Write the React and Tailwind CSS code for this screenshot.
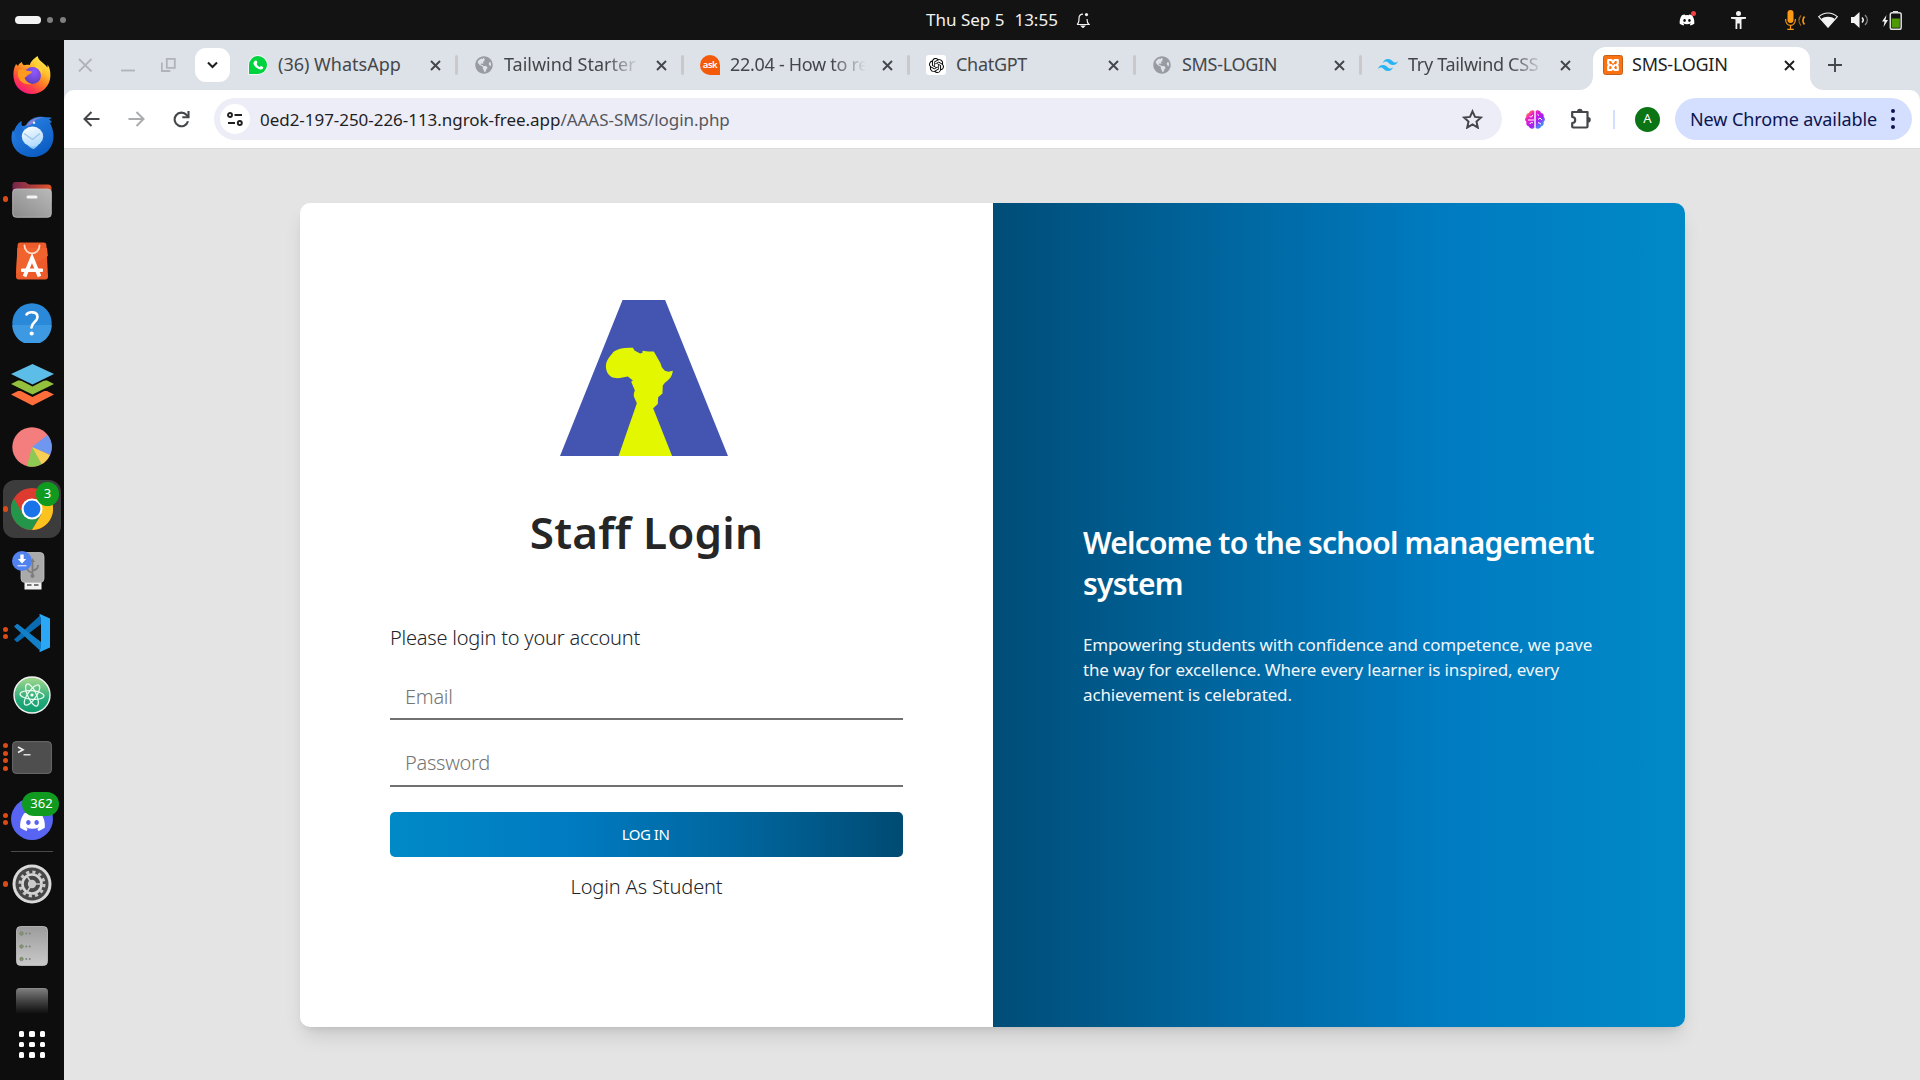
import React from "react";
import { FaDiscord, FaWhatsapp, FaGlobeAmericas } from "react-icons/fa";
import { SiTailwindcss, SiOpenai } from "react-icons/si";

/* ---------- dock icons (64px wide column, 62px pitch) ---------- */

function Firefox() {
  return (
    <svg width="38" height="40" viewBox="0 0 38 40">
      <defs>
        <linearGradient id="ffBody" x1="0.85" y1="0.05" x2="0.25" y2="1">
          <stop offset="0" stopColor="#fff44f" />
          <stop offset="0.3" stopColor="#ffc02e" />
          <stop offset="0.55" stopColor="#ff7a26" />
          <stop offset="0.8" stopColor="#ff3750" />
          <stop offset="1" stopColor="#f0128a" />
        </linearGradient>
        <radialGradient id="ffCore" cx="0.6" cy="0.3" r="0.8">
          <stop offset="0" stopColor="#9059ff" />
          <stop offset="1" stopColor="#5b3bb5" />
        </radialGradient>
      </defs>
      <path d="M24.5 1C19 5 17 8 17 10c-2-.6-5-.3-6 .2-1.500-.8-2-2.200-2-3.200-2 .8-3.500 2.500-4 4L3 9C.6 13 0 18 .6 23 2 33 10 39 19 39s18-7 18.400-18c.2-5-1-9-2.900-11.500.2 1.500 0 2.500-.3 3C32 8 26 7 24.500 1z" fill="url(#ffBody)" />
      <circle cx="19.500" cy="20.500" r="8.500" fill="url(#ffCore)" />
      <path d="M5 15c4-1.500 6-.5 8 .5l6 1c0 2-3 2.500-4 3.500-1.500 1-2 2.500-3.500 2.500 1 3 3 5.500 7 6.500-7 1-12-2-13.500-8z" fill="#ff9a1f" />
      <path d="M22 12c3 1 6 4 6.500 7 2-4 .5-9-4.500-11-1 1.500-1.500 3-2 4z" fill="#ffd23a" />
    </svg>
  );
}

function Thunderbird() {
  return (
    <svg width="43" height="42" viewBox="0 0 43 42">
      <defs>
        <linearGradient id="tbBody" x1="0" y1="0" x2="0.6" y2="1">
          <stop offset="0" stopColor="#2f86e6" />
          <stop offset="1" stopColor="#0b5dc4" />
        </linearGradient>
        <linearGradient id="tbMail" x1="0" y1="0" x2="0.4" y2="1">
          <stop offset="0" stopColor="#ffffff" />
          <stop offset="1" stopColor="#b4dcfd" />
        </linearGradient>
      </defs>
      <path d="M15 9C19 2 26 0 33 1c3 .2 6 .3 8 1-1 .6-2 1-3 1.200L41 6l-2 1c2 4 3.500 8 3.500 13C42.500 33 33 41 21.500 41S.5 33 .5 22c0-3 .5-6 1.500-8l1 2c1-4 3-8 7.500-11-1 3 0 7 4.500 4z" fill="url(#tbBody)" />
      <path d="M15 10C19 3 26 1 33 1.500c-6 .5-9 2.500-11 5.500-2 2-5 3-7 3z" fill="#8a7fd6" />
      <path d="M3 16c1-4 3-8 7.500-11-.5 5 .5 8 2 10-2 3-3 8-1 13-4-2-7-7-8.500-12z" fill="#1b6fd4" />
      <path d="M17 29c4 2 8 1 11-1-1 2-4 4-5 5-3-.5-5-2-6-4z" fill="#8cc6fb" />
      <ellipse cx="21.500" cy="20.500" rx="10.700" ry="10" fill="url(#tbMail)" />
      <path d="M13 17.500l8.500 6 7.500-6" fill="none" stroke="#9cc3ea" strokeWidth="1.100" />
      <circle cx="23" cy="6.800" r="1.200" fill="#dff0ff" />
    </svg>
  );
}

function Files() {
  return (
    <svg width="40" height="37" viewBox="0 0 40 37">
      <defs>
        <linearGradient id="flBack" x1="0" x2="1">
          <stop offset="0" stopColor="#74254e" />
          <stop offset="1" stopColor="#e2552a" />
        </linearGradient>
        <linearGradient id="flFront" x1="0" y1="1" x2="1" y2="0">
          <stop offset="0" stopColor="#8b8b8b" />
          <stop offset="1" stopColor="#b9b9b9" />
        </linearGradient>
      </defs>
      <path d="M.5 4a3 3 0 0 1 3-3H13c1.500 0 2.500 2.500 4.500 2.500H36a3.500 3.500 0 0 1 3.500 3.500v14H.5z" fill="url(#flBack)" />
      <rect x=".7" y="8" width="38.600" height="28.300" rx="3.500" fill="url(#flFront)" stroke="#c4c4c4" strokeWidth=".8" />
      <rect x="14.500" y="14.500" width="11" height="3" rx="1.500" fill="#f4f4f4" />
    </svg>
  );
}

function Software() {
  return (
    <svg width="32" height="38" viewBox="0 0 32 38">
      <path d="M4 .5h24c1.500 0 2.300 1 2.400 2.500L32 34.500c0 2-1 3-2.500 3h-27C1 37.500 0 36.500 0 34.500L1.600 3C1.700 1.500 2.500.5 4 .5z" fill="#ec5b29" />
      <path d="M1.400 6 L.1 32 L31.900 14 L31 6z" fill="#f0632e" />
      <path d="M8.500 3.500c0 10.500 15 10.500 15 0" fill="none" stroke="#ffd9c7" strokeWidth="1.800" strokeLinecap="round" />
      <path d="M8.500 34.500L16 16l7.500 18.500" fill="none" stroke="#fff" strokeWidth="3.800" />
      <rect x="5" y="26.500" width="22" height="3.400" rx="1" fill="#fff" />
    </svg>
  );
}

function Help() {
  return (
    <svg width="40" height="40" viewBox="0 0 40 40">
      <circle cx="20" cy="20" r="19.700" fill="#2b89d9" />
      <path d="M.3 22a19.700 19.700 0 0 0 39.400 0z" fill="#3d9ae2" />
      <path d="M14.500 11.500c2-3 11-3.500 11 2.500 0 5-6 5-6 10.500" fill="none" stroke="#fff" strokeWidth="2.600" strokeLinecap="round" />
      <circle cx="19.700" cy="30.500" r="2.100" fill="#fff" />
    </svg>
  );
}

function Layers() {
  return (
    <svg width="43" height="42" viewBox="0 0 43 42">
      <path d="M0 30.500l21.500 11 21.500-11-7-3.500H7z" fill="#ff6d3b" />
      <path d="M0 20.500l21.500 11 21.500-11-7-3.500H7z" fill="#0d0d0d" transform="translate(0 1.500)" />
      <path d="M0 20l21.500 10.500L43 20l-7-3.500H7z" fill="#93c13d" />
      <path d="M0 11.500L21.500 22.500 43 11.500z" fill="#0d0d0d" />
      <path d="M0 10L21.500 0 43 10 21.500 20.500z" fill="#5bbde8" />
    </svg>
  );
}

function Pie() {
  return (
    <svg width="40" height="40" viewBox="0 0 40 40">
      <circle cx="20" cy="20" r="19.700" fill="#f47d7d" />
      <path d="M20 20L35.500 8A19.700 19.700 0 0 1 38 28z" fill="#6f97ef" />
      <path d="M20 20l18 8a19.700 19.700 0 0 1-8.500 9.300z" fill="#f8cf55" />
      <path d="M20 20l9.500 17.300a19.700 19.700 0 0 1-14.500 1.800z" fill="#8cca54" />
    </svg>
  );
}

function Chrome() {
  return (
    <svg width="42" height="42" viewBox="0 0 42 42">
      <circle cx="21" cy="21" r="21" fill="#dd3b30" />
      <path d="M2.800 10.500A21 21 0 0 0 21 42l9.500-16.500L12 26z" fill="#23964a" />
      <path d="M30.500 26L21 42A21 21 0 0 0 39.500 11H21z" fill="#fcc31e" />
      <circle cx="21" cy="21" r="10.500" fill="#fff" />
      <circle cx="21" cy="21" r="8.400" fill="#1a73e8" />
    </svg>
  );
}

function UsbCreator() {
  return (
    <svg width="40" height="40" viewBox="0 0 40 40">
      <rect x="12.500" y="29" width="17" height="9.500" fill="#f2f2f2" />
      <rect x="15" y="33" width="4.500" height="2" fill="#777" />
      <rect x="22" y="33" width="4.500" height="2" fill="#777" />
      <rect x="9" y="1.500" width="23" height="30" rx="4" fill="#aaa" stroke="#c2c2c2" strokeWidth=".8" />
      <path d="M20.500 26V10M20.500 22c-5-2-5.500-3-5.500-7M20.500 20c5-2 5.500-3 5.500-6" fill="none" stroke="#7d7d7d" strokeWidth="1.800" />
      <circle cx="20.500" cy="25" r="2" fill="#7d7d7d" />
      <path d="M18 11l2.500-4 2.500 4z" fill="#7d7d7d" />
      <circle cx="10" cy="10" r="10" fill="#5282ee" />
      <path d="M10 3.500v5" stroke="#fff" strokeWidth="3.400" />
      <path d="M5.800 8l4.200 4.500L14.200 8z" fill="#fff" />
      <rect x="5.500" y="14" width="9" height="1.400" fill="#c9d8fb" />
    </svg>
  );
}

function VsCode() {
  return (
    <svg width="38" height="38" viewBox="0 0 38 38">
      <path d="M1 25.500l2.500 2.200c.5.400 1 .4 1.500 0L28 10V.5z" fill="#0a6cb3" />
      <path d="M1 12.500l2.500-2.200c.5-.4 1-.4 1.500 0L28 28v9.500z" fill="#1180c8" />
      <path d="M27.500.3L37 4.500v29l-9.500 4.200c-.6.2-1 0-1.300-.3L28 34V4L26.200.6c.3-.3.700-.5 1.300-.3z" fill="#2aa8f5" />
    </svg>
  );
}

function Atom() {
  return (
    <svg width="38" height="38" viewBox="0 0 38 38">
      <defs>
        <linearGradient id="atBg" x1="0" y1="0" x2="0" y2="1">
          <stop offset="0" stopColor="#a5d98c" />
          <stop offset="0.65" stopColor="#23a97a" />
          <stop offset="1" stopColor="#0d9b6c" />
        </linearGradient>
      </defs>
      <circle cx="19" cy="19" r="18" fill="url(#atBg)" stroke="#f2f2f2" strokeWidth="1.400" />
      <g fill="none" stroke="#eafbf1" strokeWidth="1.200">
        <ellipse cx="19" cy="19" rx="12" ry="4.300" transform="rotate(5 19 19)" />
        <ellipse cx="19" cy="19" rx="12" ry="4.300" transform="rotate(65 19 19)" />
        <ellipse cx="19" cy="19" rx="12" ry="4.300" transform="rotate(125 19 19)" />
      </g>
      <circle cx="19" cy="19" r="1.600" fill="#fff" />
    </svg>
  );
}

function Terminal() {
  return (
    <svg width="40" height="33" viewBox="0 0 40 33">
      <rect x=".6" y=".6" width="38.800" height="31.800" rx="3.500" fill="#4e4e4e" stroke="#6c6c6c" />
      <path d="M6 6l5 2.800L6 11.500" fill="none" stroke="#eee" strokeWidth="1.700" />
      <rect x="11.500" y="13" width="7" height="1.500" fill="#ddd" />
    </svg>
  );
}

function Discord() {
  return (
    <span className="flex size-[42px] items-center justify-center rounded-full bg-[#5865f2]">
      <FaDiscord className="mt-1 size-[27px] text-white" />
    </span>
  );
}

function Settings() {
  return (
    <svg width="40" height="40" viewBox="0 0 40 40">
      <circle cx="20" cy="20" r="19.500" fill="#d9d9d9" />
      <circle cx="20" cy="20" r="16.500" fill="#474747" />
      <circle cx="20" cy="20" r="12" fill="none" stroke="#c8c8c8" strokeWidth="3" strokeDasharray="3.140 3.140" />
      <circle cx="20" cy="20" r="9.500" fill="none" stroke="#d4d4d4" strokeWidth="2.600" />
      <circle cx="20" cy="20" r="4.200" fill="#c9c9c9" />
      <path d="M20 20h9M20 20l-5-8M20 20l-5 8" stroke="#c9c9c9" strokeWidth="1.600" />
    </svg>
  );
}

function Server() {
  return (
    <svg width="32" height="40" viewBox="0 0 32 40">
      <defs>
        <linearGradient id="svBg" x1="0" y1="0" x2="0" y2="1">
          <stop offset="0" stopColor="#9c9c9c" />
          <stop offset="1" stopColor="#c9c9c9" />
        </linearGradient>
      </defs>
      <rect x=".5" y=".5" width="31" height="39" rx="4" fill="url(#svBg)" stroke="#c5c5c5" strokeWidth=".8" />
      {[7.5, 20.5, 33].map((y) => (
        <g key={y}>
          <circle cx="5.500" cy={y} r="1.800" fill="#7f9a63" stroke="#777" strokeWidth=".6" />
          <circle cx="10.300" cy={y} r="1" fill="#808080" />
          <circle cx="13.800" cy={y} r="1" fill="#808080" />
        </g>
      ))}
    </svg>
  );
}

const DOCK = [
  { Icon: Firefox, dots: 0 },
  { Icon: Thunderbird, dots: 0 },
  { Icon: Files, dots: 1 },
  { Icon: Software, dots: 0 },
  { Icon: Help, dots: 0 },
  { Icon: Layers, dots: 0 },
  { Icon: Pie, dots: 0 },
  { Icon: Chrome, dots: 1, badge: "3", active: true },
  { Icon: UsbCreator, dots: 0 },
  { Icon: VsCode, dots: 2 },
  { Icon: Atom, dots: 0 },
  { Icon: Terminal, dots: 4 },
  { Icon: Discord, dots: 2, badge: "362" },
];

function DockItem({ Icon, dots = 0, badge, active }) {
  return (
    <div className="relative flex h-[62px] w-16 shrink-0 items-center justify-center">
      {active && <span className="absolute top-[2px] left-[3px] h-[58px] w-[58px] rounded-xl bg-[#3c3c3c]" />}
      <span className="absolute inset-y-0 left-[3px] flex flex-col justify-center gap-[2.600px]">
        {Array.from({ length: dots }, (_, i) => (
          <span key={i} className="size-[5.200px] rounded-full bg-[#dc4a16]" />
        ))}
      </span>
      <span className="relative">
        <Icon />
      </span>
      {badge && (
        <span className={`absolute top-[4px] flex h-[24px] items-center justify-center rounded-full bg-[#119a20] text-[13px] text-white ${badge.length > 1 ? "left-[22px] w-[37px] pl-[2px]" : "left-[36px] w-[23px]"}`}>
          {badge}
        </span>
      )}
    </div>
  );
}

function Dock() {
  return (
    <aside className="flex w-16 shrink-0 flex-col items-center bg-[#0d0d0d] pt-[4px]">
      {DOCK.map((item, i) => (
        <DockItem key={i} {...item} />
      ))}
      <span className="mt-px h-px w-[42px] shrink-0 bg-[#4b4b4b]" />
      <div className="mt-px">
        <DockItem Icon={Settings} dots={1} />
      </div>
      <DockItem Icon={Server} />
      <span className="mt-[11px] h-[26px] w-8 shrink-0 rounded-t border-t border-[#8a8a8a] bg-linear-to-b from-[#7c7c7c] to-[#0d0d0d]" />
      <div className="mt-[17px] grid shrink-0 grid-cols-3 gap-[5px]">
        {Array.from({ length: 9 }, (_, i) => (
          <span key={i} className="size-[5.500px] rounded-[1.500px] bg-white" />
        ))}
      </div>
    </aside>
  );
}

/* ---------- top bar ---------- */

function TopBar() {
  return (
    <header className="flex h-10 shrink-0 items-center bg-[#131313] text-[17px] text-[#f2f2f2]">
      <div className="flex w-[926px] items-center pl-[15px]">
        <span className="h-2 w-[26px] rounded-full bg-[#f4f4f4]" />
        <span className="ml-[6px] size-[6px] rounded-full bg-[#808080]" />
        <span className="ml-[7px] size-[6px] rounded-full bg-[#808080]" />
      </div>
      <span className="pb-px whitespace-pre">Thu Sep 5</span>
      <span className="ml-[10px] w-[44px] pb-px">13:55</span>
      <svg className="ml-[18px]" width="14" height="16" viewBox="0 0 14 16" fill="none" stroke="#f2f2f2" strokeWidth="1.200">
        <path d="M1 12.500c2-1.500 2-3 2-6C3 4 4.500 2.200 7 2.200M11 7c0 2.500 0 4 2 5.500H1" />
        <path d="M5.500 14h3L7 15.500z" fill="#f2f2f2" />
        <circle cx="10.500" cy="2.600" r="1.600" fill="#f2f2f2" stroke="none" />
      </svg>
      <div className="ml-auto flex items-center pr-[18px]">
        <span className="relative mr-[36px] flex">
          <FaDiscord className="size-[16px] text-white" />
          <span className="absolute -top-px -right-px size-[5px] rounded-full bg-[#f23f42]" />
        </span>
        <svg className="mr-[39px]" width="15" height="18" viewBox="0 0 15 18" fill="#f2f2f2">
          <circle cx="7.500" cy="2.500" r="2.500" />
          <path d="M0 6h15v1.700l-4.500.6V18H8.700v-5.500H6.300V18H4.500V8.300L0 7.700z" />
        </svg>
        <svg className="mr-[13px]" width="20" height="20" viewBox="0 0 20 20" fill="none" stroke="#fb9a15">
          <rect x="2.500" y="0" width="6" height="13" rx="3" fill="#fb9a15" stroke="none" />
          <path d="M.6 9c0 8.500 9.800 8.500 9.800 0M5.500 15.500V19M2.300 19.400h6.400" strokeWidth="1.200" />
          <path d="M16 5.500c-2.500 3-2.500 7 0 10" strokeWidth="1.200" opacity=".6" />
          <path d="M19.500 6.500c-2 2.500-2 5.500 0 8" strokeWidth="1.600" />
        </svg>
        <svg className="mr-[13px]" width="20" height="16" viewBox="0 0 20 16">
          <path d="M.7 4.700C6-.3 14-.3 19.300 4.700L10 15.300z" fill="none" stroke="#f2f2f2" strokeWidth="1.100" />
          <path d="M3 7.200C7 4 13 4 17 7.200l-7 8z" fill="#f2f2f2" />
        </svg>
        <svg className="mr-[13px]" width="18" height="16" viewBox="0 0 18 16">
          <path d="M0 5h3l5.500-5v16L3 11H0z" fill="#f2f2f2" />
          <path d="M11 5.500c1.500 1.500 1.500 3.500 0 5" fill="none" stroke="#f2f2f2" strokeWidth="1.500" />
          <path d="M14 3c3 3 3 7 0 10" fill="none" stroke="#888" strokeWidth="1.400" />
        </svg>
        <svg width="20" height="19" viewBox="0 0 20 19">
          <path d="M4.500 4L0 10.500h2.500L1.500 16 6 9H3.500z" fill="#f2f2f2" />
          <rect x="11" y="0" width="5" height="2" fill="#ddd" />
          <rect x="8.300" y="1.700" width="10.900" height="16.500" rx="1.800" fill="#131313" stroke="#ddd" strokeWidth="1.500" />
          <rect x="9.700" y="7.500" width="8.100" height="9.200" fill="#4e9a06" />
        </svg>
      </div>
    </header>
  );
}

/* ---------- browser ---------- */

function Close({ dark }) {
  return (
    <svg className="shrink-0" width="11" height="11" viewBox="0 0 11 11">
      <path d="M1 1l9 9M10 1l-9 9" stroke={dark ? "#1f1f1f" : "#44474a"} strokeWidth="1.900" />
    </svg>
  );
}

const Globe = () => (
  <span className="flex size-[18px] items-center justify-center">
    <FaGlobeAmericas className="size-[18px] text-[#989ca2]" />
  </span>
);

const WhatsApp = () => (
  <span className="flex size-[18px] items-center justify-center rounded-full rounded-bl-[2px] bg-[#00d33e] ring-1 ring-white/70">
    <svg width="11" height="11" viewBox="0 0 11 11">
      <path d="M2.600.6c.5-.3 1 0 1.200.5l.6 1.400c.1.400-.7 1.100-.7 1.400.5 1.300 1.700 2.500 3 3 .4.100 1-1 1.500-.8l1.800.9c.5.300-.1 1.700-.6 2.100C6.500 11-1.500 5 .9 1.900c.4-.6 1.100-1 1.700-1.300z" fill="#fff" />
    </svg>
  </span>
);

const Ask = () => (
  <span className="flex size-[20px] items-center justify-center rounded-full rounded-br-[2px] bg-[#f35b0a] pb-px text-[9.500px] leading-none font-semibold tracking-[-0.500px] text-white">
    ask
  </span>
);

const Gpt = () => (
  <span className="flex size-[20px] items-center justify-center rounded-[3px] bg-white">
    <SiOpenai className="size-[15px] text-black" />
  </span>
);

const Tailwind = () => <SiTailwindcss className="size-[20px] text-[#27b4f4]" />;

const Xampp = () => (
  <svg width="20" height="20" viewBox="0 0 20 20">
    <rect x=".5" y=".5" width="19" height="19" rx="2" fill="#fb7212" stroke="#c4601a" />
    <path
      d="M10 7.500L8.500 5H5.200v3.700L6.800 10l-1.600 1.300V15h3.300l3-4.800M10 7.500L11.500 5h3.300v3.700L13.200 10l1.600 1.300V15h-3.300L8.300 10"
      fill="none"
      stroke="#fff"
      strokeWidth="2.100"
      strokeLinejoin="round"
      strokeLinecap="round"
    />
  </svg>
);

const TABS = [
  { Icon: WhatsApp, title: "(36) WhatsApp", sep: true },
  { Icon: Globe, title: "Tailwind Starter", sep: true, fade: true },
  { Icon: Ask, title: "22.04 - How to re", sep: true, fade: true, tight: true },
  { Icon: Gpt, title: "ChatGPT", sep: true, tight: true },
  { Icon: Globe, title: "SMS-LOGIN", sep: true, tight: true },
  { Icon: Tailwind, title: "Try Tailwind CSS", fade: true, tight: true },
];

function Tab({ Icon, title, sep, fade, tight }) {
  return (
    <div className="flex w-[226px] shrink-0 items-center pl-[14px]">
      <span className="flex w-[20px] justify-center">
        <Icon />
      </span>
      <span className={`ml-[10px] w-[136px] overflow-hidden pb-[2px] whitespace-nowrap ${fade ? "mask-r-from-75% mask-r-to-100%" : ""} ${tight ? "tracking-[-0.300px]" : ""}`}>
        {title}
      </span>
      <span className="ml-[16px] flex">
        <Close />
      </span>
      {sep && <span className="mr-[2px] ml-auto h-[20px] w-[3px] rounded-full bg-[#c9c9ca]" />}
    </div>
  );
}

function TabStrip() {
  return (
    <div className="flex h-[50px] shrink-0 bg-[#dde1e8] text-[18px] text-[#44474a]">
      <div className="flex w-[170px] shrink-0 items-center">
        <svg className="ml-[14px]" width="15" height="14" viewBox="0 0 15 14">
          <path d="M1 1l12.500 12.500M13.500 1L1 13.500" stroke="#b0b3b8" strokeWidth="1.800" />
        </svg>
        <svg className="ml-[28px]" width="15" height="14" viewBox="0 0 15 14">
          <path d="M0 12.500h14" stroke="#b0b3b8" strokeWidth="1.800" />
        </svg>
        <svg className="ml-[25px]" width="15" height="14" viewBox="0 0 15 14" fill="none" stroke="#b0b3b8" strokeWidth="1.800">
          <path d="M5.800.8h8v9h-8zM.8 4.500V13h8.500" />
        </svg>
        <span className="ml-[19px] flex h-[34px] w-[35px] items-center justify-center rounded-[11px] bg-white">
          <svg width="11" height="8" viewBox="0 0 11 8">
            <path d="M1 1.500L5.500 6 10 1.500" fill="none" stroke="#1f1f1f" strokeWidth="2.100" />
          </svg>
        </span>
      </div>
      {TABS.map((t, i) => (
        <Tab key={i} {...t} />
      ))}
      {/* selected tab with flared feet */}
      <div className="relative mt-[7px] ml-[3px] flex h-[43px] w-[217px] shrink-0 items-center rounded-t-[13px] bg-white pb-[7px] pl-[10px] text-[#1f1f1f]">
        <svg className="absolute bottom-0 -left-[14px]" width="14" height="14" viewBox="0 0 14 14">
          <path d="M14 0v14H0C8 14 14 8 14 0z" fill="#fff" />
        </svg>
        <svg className="absolute -right-[14px] bottom-0" width="14" height="14" viewBox="0 0 14 14">
          <path d="M0 0v14h14C6 14 0 8 0 0z" fill="#fff" />
        </svg>
        <Xampp />
        <span className="ml-[9px] w-[134px] pb-[2px] tracking-[-0.250px]">SMS-LOGIN</span>
        <span className="ml-[18px] flex">
          <Close dark />
        </span>
      </div>
      <svg className="ml-[18px] self-center" width="14" height="14" viewBox="0 0 14 14">
        <path d="M7 0v14M0 7h14" stroke="#44474a" strokeWidth="1.900" />
      </svg>
    </div>
  );
}

function Toolbar() {
  return (
    <div className="h-[58px] shrink-0 bg-[#dde1e8]">
      <div className="flex h-[58px] items-center rounded-t-[10px] bg-white text-[#44474a]">
        <svg className="ml-[19px]" width="17" height="16" viewBox="0 0 17 16" fill="none" stroke="#44474a" strokeWidth="2">
          <path d="M16.500 8H2M8.500 1L1.500 8l7 7" />
        </svg>
        <svg className="ml-[28px]" width="17" height="16" viewBox="0 0 17 16" fill="none" stroke="#a9abad" strokeWidth="2">
          <path d="M.5 8H15M8.500 1l7 7-7 7" />
        </svg>
        <svg className="ml-[28px]" width="17" height="17" viewBox="0 0 17 17" fill="none" stroke="#44474a" strokeWidth="2.100">
          <path d="M15 10.300A6.800 6.800 0 1 1 13.600 4L15.500 6" />
          <path d="M15.500 0v6.300H9.300" />
        </svg>
        <div className="ml-[24px] flex h-[42px] w-[1288px] items-center rounded-full bg-[#ededf8]">
          <span className="ml-[6px] flex size-[30px] items-center justify-center rounded-full bg-white">
            <svg width="16" height="14" viewBox="0 0 16 14" fill="none" stroke="#1f1f1f" strokeWidth="1.900">
              <circle cx="3" cy="3" r="2" />
              <path d="M7.500 3H15M1 11h7" />
              <circle cx="12.800" cy="11" r="2" />
            </svg>
          </span>
          <span className="ml-[10px] pt-px text-[17px] tracking-[-0.040px] text-[#1f1f1f]">
            0ed2-197-250-226-113.ngrok-free.app<span className="text-[#55575c]">/AAAS-SMS/login.php</span>
          </span>
          <svg className="mr-[19px] ml-auto" width="21" height="20" viewBox="0 0 21 20">
            <path d="M10.500 2.300l2.500 5.600 6 .6-4.500 4.100 1.300 6-5.300-3.100-5.300 3.100 1.300-6L2 8.500l6-.6z" fill="none" stroke="#44474a" strokeWidth="2" />
          </svg>
        </div>
        <svg className="ml-[23px]" width="20" height="19" viewBox="0 0 20 19">
          <defs>
            <linearGradient id="brain" x1="0" y1="0" x2="1" y2="1">
              <stop offset=".08" stopColor="#ff9d2e" />
              <stop offset=".28" stopColor="#f21fc4" />
              <stop offset=".6" stopColor="#a41cf5" />
              <stop offset=".9" stopColor="#27b1fb" />
            </linearGradient>
          </defs>
          <path d="M9.300 1v17c-2 1.500-5 .5-5.300-1.500C1.500 16 .8 13.500 1.500 12-.5 10.500-.2 8 1.300 7 .8 4.500 2.300 3 4 3c.5-2.500 4-3.500 5.300-2zM10.700 1v17c2 1.500 5 .5 5.300-1.500 2.500-.5 3.200-3 2.500-4.500 2-1.500 1.700-4 .2-5C19.200 4.500 17.700 3 16 3c-.5-2.500-4-3.500-5.300-2z" fill="url(#brain)" />
          <path d="M3 10h6M4.500 6.500c2 1 3 0 3-1.500M5 14c0-1.500 2-2 3-1M17 10l-2-2-2 1.500M14 5.500l-1.500-1M16 14l-3-1.500" fill="none" stroke="#fff" strokeWidth="1" />
        </svg>
        <svg className="ml-[25px]" width="22" height="22" viewBox="0 0 22 22">
          <path d="M2.200 4h15.300v14.500a1 1 0 0 1-1 1H3.200a1 1 0 0 1-1-1V15c4 0 4-6 0-6z" fill="none" stroke="#44474a" strokeWidth="2.200" strokeLinejoin="round" />
          <path d="M7 3.500a2.800 2.800 0 0 1 5.600 0zM18 9a2.800 2.800 0 0 1 0 5.600z" fill="#44474a" />
        </svg>
        <span className="ml-[21px] h-[19px] w-[2px] bg-[#d4deff]" />
        <span className="ml-[20px] flex size-[25px] items-center justify-center rounded-full bg-[#0b7415] text-[13px] text-white">A</span>
        <div className="ml-[15px] flex h-[42px] w-[237px] items-center rounded-full bg-[#d4deff] pl-[15px] text-[18px] text-[#0a1550]">
          <span className="w-[188px] tracking-[-0.100px] whitespace-nowrap">New Chrome available</span>
          <span className="ml-[13px] flex flex-col gap-[4px]">
            <span className="size-[4px] rounded-full bg-[#0a1550]" />
            <span className="size-[4px] rounded-full bg-[#0a1550]" />
            <span className="size-[4px] rounded-full bg-[#0a1550]" />
          </span>
        </div>
      </div>
    </div>
  );
}

/* ---------- login page ---------- */

function AfricaLogo() {
  return (
    <svg className="mt-[97px] ml-[170px]" width="168" height="156" viewBox="60 61 505 467" preserveAspectRatio="none">
      <path d="M248 61H376L565 528H60z" fill="#4355b1" />
      <path d="M198 262C197 240 212 228 222 215C238 204 258 203 279 204L284 212L301 221L308 219V213L325 215H342L349 227L362 250L366 262L375 273L386 276L399 273C398 290 388 300 376 308L369 317L368 341L355 352L354 372L340 385L397 528H236L291 370L282 350V340L285 332L274 306L279 302L264 290C248 292 238 298 222 294C206 290 199 275 198 262z" fill="#e2f700" />
    </svg>
  );
}

function LoginCard() {
  return (
    <section className="flex h-[824px] w-[1385px] overflow-hidden rounded-[10px] bg-white shadow-[0_12px_20px_-4px_rgba(0,0,0,0.12),0_5px_8px_-5px_rgba(0,0,0,0.12)]">
      <form className="flex w-[693px] flex-col px-[90px] text-[20px] font-[350] text-[#212529]" onSubmit={(e) => e.preventDefault()}>
        <AfricaLogo />
        <h1 className="mt-[49px] text-center text-[44px] leading-[54px] font-semibold tracking-[0.200px] text-[#262626]">Staff Login</h1>
        <p className="mt-[64px] leading-[30px] tracking-[-0.220px]">Please login to your account</p>
        <input
          type="email"
          placeholder="Email"
          className="mt-[21px] h-[46px] border-b-2 border-[#717171] pl-[15px] tracking-[-0.280px] outline-none placeholder:text-[#757575]"
        />
        <input
          type="password"
          placeholder="Password"
          className="mt-[19px] h-[48px] border-b-2 border-[#717171] pl-[15px] tracking-[-0.280px] outline-none placeholder:text-[#757575]"
        />
        <button
          type="submit"
          className="mt-[25px] h-[45px] rounded-[5px] bg-[linear-gradient(to_right,#0089c7,#007bc1_35%,#00649b_70%,#004b73)] pr-[2px] text-[15px] font-normal tracking-[-0.500px] text-white"
        >
          LOG IN
        </button>
        <a className="mt-[15px] text-center leading-[30px] tracking-[-0.120px]">Login As Student</a>
      </form>
      <div className="flex flex-1 flex-col bg-[linear-gradient(to_right,#004d77,#00659d_32%,#007bc1_65%,#0089c7)] px-[90px] text-white">
        <h2 className="mt-[320px] text-[30px] leading-[40.500px] font-semibold tracking-[-0.800px]">
          Welcome to the school management system
        </h2>
        <p className="mt-[28px] text-[17px] leading-[25px] tracking-[-0.150px] text-[#f2f6fa]">
          Empowering students with confidence and competence, we pave the way for excellence. Where every learner is inspired, every achievement is celebrated.
        </p>
      </div>
    </section>
  );
}

export default function App() {
  return (
    <div className="flex h-[1080px] w-[1920px] flex-col overflow-hidden font-['Noto_Sans',sans-serif]">
      <TopBar />
      <div className="flex min-h-0 flex-1">
        <Dock />
        <div className="flex min-w-0 flex-1 flex-col">
          <TabStrip />
          <Toolbar />
          <main className="flex flex-1 items-start border-t border-[#dcdcdc] bg-[#e4e4e4] pt-[54px] pl-[236px]">
            <LoginCard />
          </main>
        </div>
      </div>
    </div>
  );
}
